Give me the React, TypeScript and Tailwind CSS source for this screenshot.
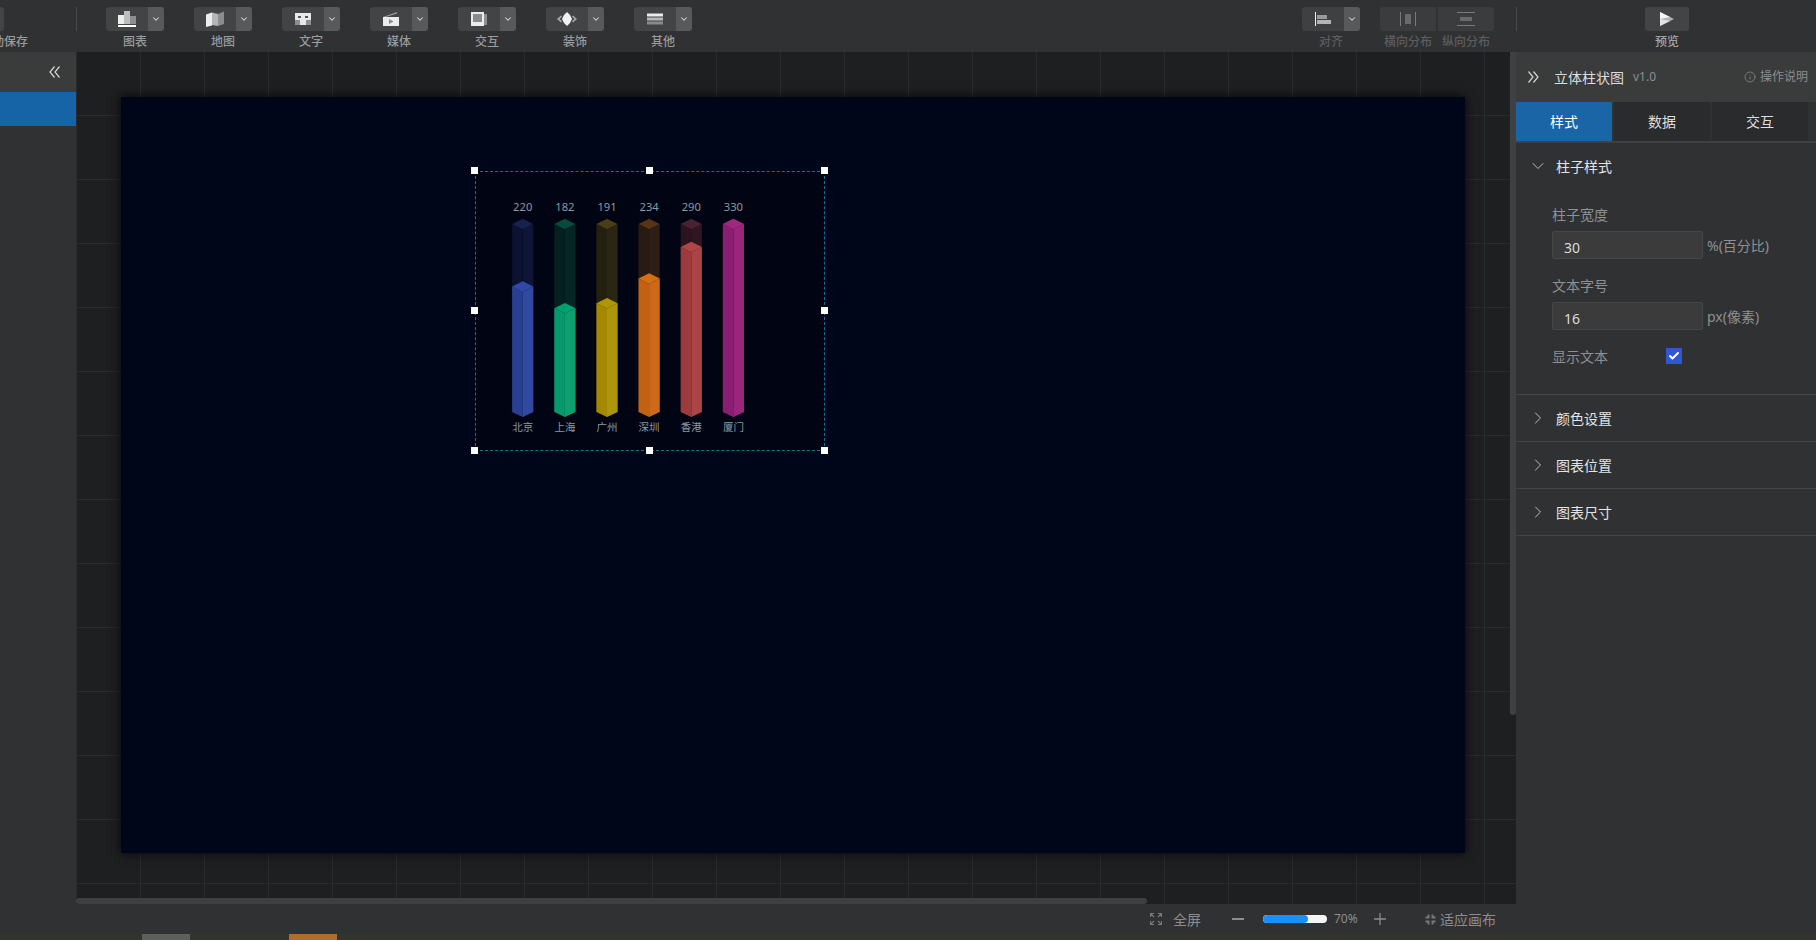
import React from "react";
import { ChevronDown, ChevronRight, Check, Info } from "lucide-react";

const I = ({ children }: { children: React.ReactNode }) => (
  <svg width="20" height="18" viewBox="0 0 20 18">{children}</svg>
);

const icons: Record<string, React.ReactNode> = {
  chart: (
    <I>
      <rect x="1" y="5" width="6" height="9" fill="#ededed" />
      <rect x="7" y="1" width="6" height="13" fill="#bdbdbd" />
      <rect x="13" y="6" width="6" height="8" fill="#8f8f8f" />
      <rect x="1" y="15" width="18" height="2" fill="#ffffff" />
    </I>
  ),
  map: (
    <I>
      <path d="M1 4.500l6-2v13l-6 1.500z" fill="#ededed" />
      <path d="M7 2.500l6 1.500v12l-6-1z" fill="#b5b5b5" />
      <path d="M13 4l6-2.500v12.500l-6 2z" fill="#8d8d8d" />
    </I>
  ),
  text: (
    <I>
      <rect x="2" y="3" width="16" height="12" fill="#e8e8e8" />
      <rect x="2" y="10" width="5" height="5" fill="#8f8f8f" />
      <rect x="13" y="10" width="5" height="5" fill="#8f8f8f" />
      <rect x="5" y="6" width="3" height="2" fill="#55565a" />
      <rect x="12" y="6" width="3" height="2" fill="#55565a" />
    </I>
  ),
  media: (
    <I>
      <path d="M2 7l14-5v1.500L5 7z" fill="#9a9a9a" />
      <rect x="2" y="7" width="16" height="9" fill="#ececec" />
      <path d="M8 9l4.500 2.500L8 14z" fill="#8a8a8a" />
    </I>
  ),
  inter: (
    <I>
      <rect x="14" y="4" width="4" height="11" fill="#8f8f8f" />
      <rect x="2" y="2" width="13" height="14" fill="#ececec" />
      <rect x="4" y="4" width="9" height="8" fill="#8a8a8a" />
    </I>
  ),
  deco: (
    <I>
      <path d="M10 2l3 3 2 4-2 4-3 3-3-3-2-4 2-4z" fill="#f2f2f2" />
      <path d="M4 5.500L0 9l4 3.500 1-1.200L2.500 9 5 6.700z" fill="#a8a8a8" />
      <path d="M16 5.500l4 3.500-4 3.500-1-1.200L17.500 9 15 6.700z" fill="#a8a8a8" />
    </I>
  ),
  other: (
    <I>
      <rect x="2" y="3.500" width="16" height="3" fill="#ececec" />
      <rect x="2" y="7.500" width="16" height="3" fill="#b8b8b8" />
      <rect x="2" y="11.500" width="16" height="3" fill="#8a8a8a" />
    </I>
  ),
};

const tools = [
  ["图表", "chart"],
  ["地图", "map"],
  ["文字", "text"],
  ["媒体", "media"],
  ["交互", "inter"],
  ["装饰", "deco"],
  ["其他", "other"],
];

const Caret = () => (
  <div className="w-[16px] h-full bg-[#58595a] rounded-r-[3px] flex items-center justify-center">
    <ChevronDown size={10} strokeWidth={2.5} color="#d8d8d8" />
  </div>
);

const bars = [
  { c: 522.7, t: 281.3, name: "北京", v: 220, tl: "#0c1232", tr: "#0e1537", tt: "#17214e", l: "#2a3f92", r: "#2f4a9f", h: "#3048a8" },
  { c: 564.9, t: 303, name: "上海", v: 182, tl: "#04201f", tr: "#052624", tt: "#0a4a3c", l: "#08996a", r: "#0e9f6f", h: "#02a06c" },
  { c: 607, t: 298, name: "广州", v: 191, tl: "#232010", tr: "#2a2614", tt: "#4a3e15", l: "#a38800", r: "#ad950e", h: "#ae9700" },
  { c: 649.1, t: 273.3, name: "深圳", v: 234, tl: "#2a1a14", tr: "#2e1e16", tt: "#573318", l: "#c06212", r: "#cf691a", h: "#d27012" },
  { c: 691.3, t: 241.7, name: "香港", v: 290, tl: "#2b141e", tr: "#2f1620", tt: "#4a2130", l: "#9d3a3c", r: "#aa4446", h: "#b04648" },
  { c: 733.4, t: 218.7, name: "厦门", v: 330, tl: "#2b141e", tr: "#2f1620", tt: "#4a2130", l: "#8a1e72", r: "#9a257c", h: "#a2287f" },
];

const W = 10.6;

function Column({ c, t, l, r, h }: { c: number; t: number; l: string; r: string; h: string }) {
  const s = t + 5.3;
  const m = t + 10.6;
  return (
    <g>
      <polygon points={`${c - W},${s} ${c},${m} ${c},417 ${c - W},412`} fill={l} />
      <polygon points={`${c + W},${s} ${c},${m} ${c},417 ${c + W},412`} fill={r} />
      <polygon points={`${c},${t} ${c + W},${s} ${c},${m} ${c - W},${s}`} fill={h} />
    </g>
  );
}

function Chart() {
  return (
    <svg width="350" height="280" viewBox="475 171 350 280" className="block">
      {bars.map((b) => (
        <g key={b.name}>
          <Column c={b.c} t={218.7} l={b.tl} r={b.tr} h={b.tt} />
          <Column c={b.c} t={b.t} l={b.l} r={b.r} h={b.h} />
          <text x={b.c} y={210.8} textAnchor="middle" fontSize="11.2" fill="#8b9ba3" fontFamily="'Noto Sans','Noto Sans CJK SC',sans-serif">
            {b.v}
          </text>
          <text x={b.c} y={430.6} textAnchor="middle" fontSize="10.5" fill="#8b9ba3" fontFamily="'Noto Sans CJK SC',sans-serif">
            {b.name}
          </text>
        </g>
      ))}
    </svg>
  );
}

const Handle = ({ className }: { className: string }) => (
  <div className={`absolute w-[7px] h-[7px] bg-white ${className}`} />
);

const Field = ({ label, value, unit }: { label: string; value: string; unit: string }) => (
  <div>
    <div className="h-[20px] leading-[20px] text-[#8f9091]">{label}</div>
    <div className="mt-[6px] flex items-center">
      <input
        readOnly
        value={value}
        className="w-[151px] h-[28px] pl-[11px] pt-[4px] bg-[#3a3b3a] border border-[#454647] rounded-[2px] text-[#dcdcdc] text-[14px] outline-none"
      />
      <span className="ml-[4px] text-[#8f9091] text-[14px] whitespace-nowrap">{unit}</span>
    </div>
  </div>
);

const Section = ({ title }: { title: string }) => (
  <div className="h-[47px] border-b border-[#444546] flex items-center pl-[12px] text-[#e4e4e4]">
    <ChevronRight size={20} strokeWidth={1.1} color="#c8c8c8" />
    <span className="ml-[8px]">{title}</span>
  </div>
);

const DoubleChevron = ({ flip }: { flip?: boolean }) => (
  <svg width="11" height="12" viewBox="0 0 11 12" fill="none" stroke="#d4d4d4" strokeWidth="1.2">
    <path d={flip ? "M0.500 0.500L5 6L0.500 11.500M5.500 0.500L10 6L5.500 11.500" : "M5.500 0.500L1 6L5.500 11.500M10.500 0.500L6 6L10.500 11.500"} />
  </svg>
);

export default function App() {
  return (
    <div className="relative w-[1816px] h-[940px] overflow-hidden flex flex-col bg-[#303133] text-[14px] font-[family-name:'Noto_Sans','Noto_Sans_CJK_SC',sans-serif]">
      {/* toolbar */}
      <div className="h-[52px] shrink-0 flex bg-[#303133] text-[12px] font-medium">
        <div className="w-[4px] pt-[7px]">
          <div className="h-[24px] bg-[#434445] rounded-r-[3px]" />
          <div className="mt-[3px] h-[16px] leading-[16px] -ml-[20px] w-[48px] text-[#999a9b] whitespace-nowrap">自动保存</div>
        </div>
        <div className="ml-[72px] mt-[7px] w-px h-[24px] bg-[#4a4b4c]" />
        <div className="ml-[29px] flex gap-[30px]">
          {tools.map(([name, k]) => (
            <div key={name} className="w-[58px] pt-[7px] flex flex-col items-center">
              <div className="w-full h-[24px] flex">
                <div className="flex-1 bg-[#434445] rounded-l-[3px] flex items-center justify-center pr-[1px]">{icons[k]}</div>
                <Caret />
              </div>
              <div className="mt-[3px] h-[16px] leading-[16px] text-[#999a9b]">{name}</div>
            </div>
          ))}
        </div>
        <div className="ml-[610px] w-[58px] pt-[7px] flex flex-col items-center">
          <div className="w-full h-[24px] flex">
            <div className="flex-1 bg-[#3f4041] rounded-l-[3px] flex items-center justify-center">
              <svg width="16" height="14" viewBox="0 0 16 14">
                <rect x="0" y="0" width="1" height="14" fill="#f0f0f0" />
                <rect x="2" y="3" width="10" height="4" fill="#9a9a9a" />
                <rect x="2" y="8" width="14" height="4" fill="#b4b4b4" />
              </svg>
            </div>
            <Caret />
          </div>
          <div className="mt-[3px] h-[16px] leading-[16px] text-[#5c5d5e]">对齐</div>
        </div>
        <div className="ml-[20px] w-[56px] pt-[7px] flex flex-col items-center">
          <div className="w-full h-[24px] bg-[#3b3c3d] rounded-l-[3px] flex items-center justify-center">
            <svg width="18" height="16" viewBox="0 0 18 16">
              <rect x="1" y="1" width="1" height="14" fill="#7a7a7a" />
              <rect x="6" y="3" width="6" height="10" fill="#6a6a6a" />
              <rect x="16" y="1" width="1" height="14" fill="#7a7a7a" />
            </svg>
          </div>
          <div className="mt-[3px] h-[16px] leading-[16px] text-[#5c5d5e] whitespace-nowrap">横向分布</div>
        </div>
        <div className="ml-[2px] w-[56px] pt-[7px] flex flex-col items-center">
          <div className="w-full h-[24px] bg-[#3b3c3d] rounded-r-[3px] flex items-center justify-center">
            <svg width="18" height="16" viewBox="0 0 18 16">
              <rect x="0" y="1" width="18" height="1" fill="#7a7a7a" />
              <rect x="3" y="6" width="12" height="4" fill="#6a6a6a" />
              <rect x="0" y="14" width="18" height="1" fill="#7a7a7a" />
            </svg>
          </div>
          <div className="mt-[3px] h-[16px] leading-[16px] text-[#5c5d5e] whitespace-nowrap">纵向分布</div>
        </div>
        <div className="ml-[22px] mt-[7px] w-px h-[24px] bg-[#4a4b4c]" />
        <div className="ml-[128px] w-[44px] pt-[7px] flex flex-col items-center">
          <div className="w-full h-[24px] bg-[#434445] rounded-[3px] flex items-center justify-center">
            <svg width="14" height="14" viewBox="0 0 14 14">
              <path d="M0 0l14 7-14 7z" fill="#b4b4b4" />
              <path d="M0 0l10 5-10 2z" fill="#f6f6f6" />
              <path d="M0 14l10-5-10-2z" fill="#e4e4e4" />
            </svg>
          </div>
          <div className="mt-[3px] h-[16px] leading-[16px] text-[#a4a5a6]">预览</div>
        </div>
      </div>

      {/* main */}
      <div className="flex-1 min-h-0 flex">
        <div className="w-[76px] shrink-0 bg-[#303133]">
          <div className="h-[40px] bg-[#3a3b3b] flex items-center justify-end pr-[16px]">
            <DoubleChevron />
          </div>
          <div className="h-[34px] bg-[#1664a5]" />
        </div>

        <div className="relative flex-1 min-w-0 flex flex-col">
          <div className="flex-1 min-h-0 overflow-hidden pl-[45px] pt-[45px] bg-[#1e1f21] bg-[linear-gradient(#2a2b2d_1px,transparent_1px),linear-gradient(90deg,#2a2b2d_1px,transparent_1px)] bg-[size:64px_64px] bg-[position:0px_-1px]">
            <div className="relative w-[1344px] h-[756px] bg-[#00061a] shadow-[0_0_10px_rgba(0,0,0,0.9)]">
              <div className="absolute left-[354px] top-[74px] w-[350px] h-[280px] border border-dashed border-[#13709a] bg-[#000413]">
                <div className="-m-px">
                  <Chart />
                </div>
                <Handle className="-left-[5px] -top-[5px]" />
                <Handle className="left-[170px] -top-[5px]" />
                <Handle className="-right-[4px] -top-[5px]" />
                <Handle className="-left-[5px] top-[135px]" />
                <Handle className="-right-[4px] top-[135px]" />
                <Handle className="-left-[5px] -bottom-[4px]" />
                <Handle className="left-[170px] -bottom-[4px]" />
                <Handle className="-right-[4px] -bottom-[4px]" />
              </div>
            </div>
          </div>
          <div className="absolute left-0 bottom-[30px] w-[1071px] h-[6px] rounded-[3px] bg-[#3f3f40]" />
          <div className="absolute right-0 top-0 w-[6px] h-[663px] rounded-b-[3px] bg-[#3f4041]" />
          <div className="h-[30px] shrink-0 bg-[#303133] flex items-center justify-end pr-[20px] text-[#8c8d8e]">
            <svg width="12" height="12" viewBox="0 0 12 12" fill="none" stroke="#77787a" strokeWidth="1.2">
              <path d="M0.500 4V0.500H4M0.500 0.500l3.500 3.500M8 0.500h3.500V4M11.500 0.500L8 4M0.500 8v3.500H4M0.500 11.500L4 8M11.500 8v3.500H8M11.500 11.500L8 8" />
            </svg>
            <span className="ml-[11px] text-[14px]">全屏</span>
            <div className="ml-[31px] w-[12px] h-[1.500px] bg-[#8c8d8e]" />
            <div className="ml-[19px] w-[64px] h-[8px] rounded-[4px] bg-[#f5f5f5] overflow-hidden">
              <div className="w-[45px] h-full rounded-[4px] bg-[#1890ff]" />
            </div>
            <span className="ml-[7px] text-[12px] w-[24px] whitespace-nowrap">70%</span>
            <svg className="ml-[16px]" width="12" height="12" viewBox="0 0 12 12" stroke="#8c8d8e" strokeWidth="1.3">
              <path d="M0 6h12M6 0v12" />
            </svg>
            <svg className="ml-[39px]" width="11" height="11" viewBox="0 0 11 11" fill="none" stroke="#77787a" strokeWidth="2">
              <path d="M3.500 0.500v3h-3M7.500 0.500v3h3M3.500 10.500v-3h-3M7.500 10.500v-3h3" />
            </svg>
            <span className="ml-[4px] text-[14px]">适应画布</span>
          </div>
        </div>

        <div className="w-[300px] shrink-0 bg-[#303133]">
          <div className="h-[50px] bg-[#3a3b3b] flex items-center text-[#dcdcdc]">
            <div className="ml-[12px]">
              <DoubleChevron flip />
            </div>
            <span className="ml-[15px]">立体柱状图</span>
            <span className="ml-[9px] text-[12px] text-[#8c8d8e]">v1.0</span>
            <Info className="ml-[auto]" size={12} strokeWidth={1.5} color="#8c8d8e" />
            <span className="ml-[4px] mr-[8px] text-[12px] text-[#8c8d8e]">操作说明</span>
          </div>
          <div className="h-[41px] flex gap-[2px] border-b-2 border-[#3f4041] bg-[#303133]">
            <div className="w-[96px] bg-[#1a65a6] text-white flex items-center justify-center">样式</div>
            <div className="w-[96px] bg-[#2a2b2d] text-[#dedede] flex items-center justify-center">数据</div>
            <div className="w-[96px] bg-[#2a2b2d] text-[#dedede] flex items-center justify-center">交互</div>
          </div>
          <div className="border-b border-[#444546]">
            <div className="h-[46px] flex items-center pl-[12px] text-[#e4e4e4]">
              <ChevronDown size={20} strokeWidth={1.1} color="#c8c8c8" />
              <span className="ml-[8px]">柱子样式</span>
            </div>
            <div className="pl-[36px] pt-[16px] pb-[28px] flex flex-col gap-[17px]">
              <Field label="柱子宽度" value="30" unit="%(百分比)" />
              <Field label="文本字号" value="16" unit="px(像素)" />
              <div className="-mt-[1px] h-[20px] flex items-center text-[#8f9091]">
                <span className="w-[114px]">显示文本</span>
                <div className="w-[16px] h-[16px] bg-[#3056d3] flex items-center justify-center">
                  <Check size={12} strokeWidth={4} color="#ffffff" />
                </div>
              </div>
            </div>
          </div>
          <Section title="颜色设置" />
          <Section title="图表位置" />
          <Section title="图表尺寸" />
        </div>
      </div>

      {/* bottom strip */}
      <div className="h-[6px] shrink-0 flex bg-[#33342c]">
        <div className="ml-[142px] w-[48px] bg-[#5e5f58]" />
        <div className="ml-[99px] w-[48px] bg-[#b06c2c]" />
      </div>
    </div>
  );
}
